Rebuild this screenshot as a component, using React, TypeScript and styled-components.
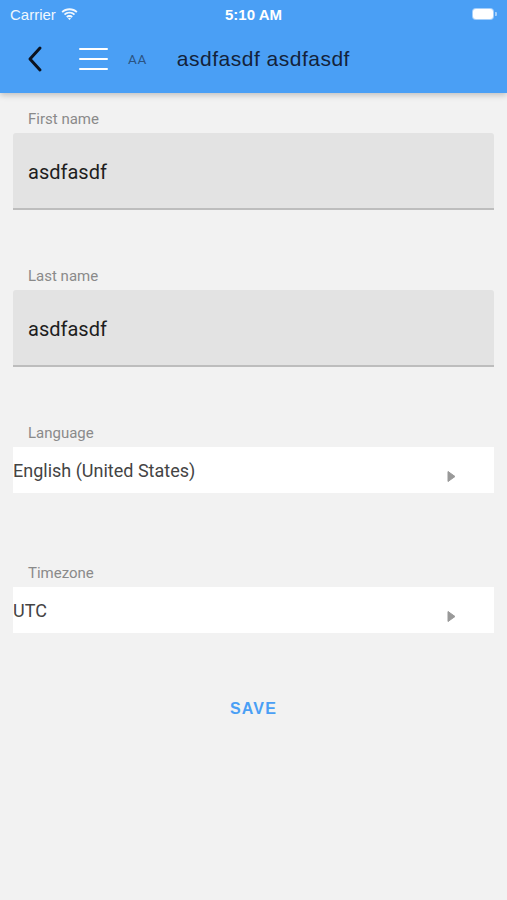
import React from "react";
import styled, { createGlobalStyle } from "styled-components";

const GlobalStyle = createGlobalStyle`
  html, body {
    margin: 0;
    padding: 0;
    background: #f2f2f2;
  }
  body {
    font-family: Roboto, "Noto Sans", sans-serif;
  }
`;

const fields = [
  { label: "First name", value: "asdfasdf" },
  { label: "Last name", value: "asdfasdf" },
];

const pickers = [
  { label: "Language", value: "English (United States)" },
  { label: "Timezone", value: "UTC" },
];

const App = () => {
  return (
    <Page>
      <GlobalStyle />
      <Header>
        <StatusBar>
          <Carrier>
            Carrier
            <svg width="17" height="12" viewBox="0 0 17 12">
              <path d="M8.5 2.2c2.6 0 4.9 1 6.7 2.6l1.3-1.4C14.4 1.4 11.6.2 8.5.2S2.6 1.4.5 3.4l1.3 1.4C3.6 3.2 5.9 2.2 8.5 2.2z" fill="#fff" />
              <path d="M8.5 5.6c1.7 0 3.2.6 4.3 1.7l1.3-1.4C12.6 4.5 10.7 3.7 8.5 3.7S4.4 4.5 2.9 5.9l1.3 1.4C5.3 6.2 6.8 5.6 8.5 5.6z" fill="#fff" />
              <path d="M8.5 9c.8 0 1.5.3 2 .8l1.3-1.4C10.9 7.6 9.8 7.1 8.5 7.1s-2.4.5-3.3 1.3l1.3 1.4c.5-.5 1.2-.8 2-.8zM8.5 11.9l1.5-1.5c-.4-.4-.9-.6-1.5-.6s-1.1.2-1.5.6z" fill="#fff" />
            </svg>
          </Carrier>
          <Clock>5:10 AM</Clock>
          <Battery>
            <BatteryBody />
            <BatteryCap />
          </Battery>
        </StatusBar>
        <NavBar>
          <IconButton>
            <svg width="18" height="28" viewBox="0 0 18 28">
              <path d="M14 3 L4 14 L14 25" fill="none" stroke="#0c1320" strokeWidth="3" strokeLinecap="round" strokeLinejoin="round" />
            </svg>
          </IconButton>
          <Hamburger>
            <span />
            <span />
            <span />
          </Hamburger>
          <FontSize>AA</FontSize>
          <Title>asdfasdf asdfasdf</Title>
        </NavBar>
      </Header>

      <Form>
        {fields.map((f) => (
          <Field key={f.label}>
            <Label>{f.label}</Label>
            <TextBox>{f.value}</TextBox>
          </Field>
        ))}
        {pickers.map((p) => (
          <Field key={p.label} $picker>
            <Label>{p.label}</Label>
            <Picker>
              <PickerValue>{p.value}</PickerValue>
              <svg width="9" height="13" viewBox="0 0 9 13">
                <path d="M1 1.5 L8 6.5 L1 11.5 Z" fill="#999" stroke="#999" strokeWidth="1" strokeLinejoin="round" />
              </svg>
            </Picker>
          </Field>
        ))}
        <SaveButton>SAVE</SaveButton>
      </Form>
    </Page>
  );
};

const Page = styled.div`
  min-height: 900px;
  background: #f2f2f2;
`;

const Header = styled.div`
  background: #4a9ff5;
  height: 93px;
  box-shadow: 0 2px 6px rgba(0, 0, 0, 0.22);
  position: relative;
  z-index: 1;
`;

const StatusBar = styled.div`
  height: 28px;
  display: flex;
  align-items: center;
  justify-content: space-between;
  padding: 0 10px 0 10px;
  color: #fff;
  font-family: "Liberation Sans", Arial, sans-serif;
  font-size: 15px;
`;

const Carrier = styled.div`
  display: flex;
  align-items: center;
  gap: 5px;
  width: 120px;
  opacity: 0.92;
`;

const Clock = styled.div`
  font-weight: bold;
  font-size: 15px;
`;

const Battery = styled.div`
  width: 120px;
  display: flex;
  justify-content: flex-end;
  align-items: center;
`;

const BatteryBody = styled.div`
  width: 20px;
  height: 10px;
  border-radius: 3px;
  background: #fff;
  box-shadow: 0 0 0 1px rgba(255, 255, 255, 0.5);
`;

const BatteryCap = styled.div`
  width: 2px;
  height: 4px;
  margin-left: 2px;
  border-radius: 0 1px 1px 0;
  background: rgba(255, 255, 255, 0.5);
`;

const NavBar = styled.div`
  height: 65px;
  display: flex;
  align-items: center;
  padding-left: 26px;
  padding-bottom: 3px;
  box-sizing: border-box;
`;

const IconButton = styled.div`
  display: flex;
  align-items: center;
  width: 18px;
`;

const Hamburger = styled.div`
  margin-left: 35px;
  width: 29px;
  display: flex;
  flex-direction: column;
  gap: 8px;

  span {
    display: block;
    height: 2px;
    background: #fff;
    border-radius: 1px;
  }
`;

const FontSize = styled.div`
  margin-left: 20px;
  font-size: 13.5px;
  color: #2a5382;
  letter-spacing: 0.6px;
`;

const Title = styled.div`
  margin-left: 30px;
  font-family: "Liberation Sans", Arial, sans-serif;
  font-size: 21px;
  letter-spacing: 0.5px;
  color: #13223a;
`;

const Form = styled.div`
  padding: 16px 13px 0 13px;
  display: flex;
  flex-direction: column;
`;

const Field = styled.div<{ $picker?: boolean }>`
  display: flex;
  flex-direction: column;
  margin-bottom: ${({ $picker }) => ($picker ? "70px" : "56px")};
`;

const Label = styled.div`
  font-size: 15px;
  color: #8a8a8a;
  padding-left: 15px;
  height: 20px;
  line-height: 20px;
  margin-bottom: 4px;
`;

const TextBox = styled.div`
  background: #e3e3e3;
  border-bottom: 2px solid #bdbdbd;
  border-radius: 3px 3px 0 0;
  display: flex;
  align-items: center;
  padding-left: 15px;
  padding-top: 3px;
  height: 72px;
  font-size: 20px;
  color: #1e1e1e;
`;

const Picker = styled.div`
  height: 46px;
  background: #fff;
  display: flex;
  align-items: center;
  justify-content: space-between;
  padding-right: 38px;

  svg {
    margin-top: 13px;
  }
`;

const PickerValue = styled.div`
  font-size: 18px;
  color: #444;
`;

const SaveButton = styled.div`
  align-self: center;
  margin-top: -3px;
  font-family: "Liberation Sans", Arial, sans-serif;
  font-weight: bold;
  font-size: 16px;
  letter-spacing: 1.2px;
  color: #4a9ff5;
`;

export default App;
